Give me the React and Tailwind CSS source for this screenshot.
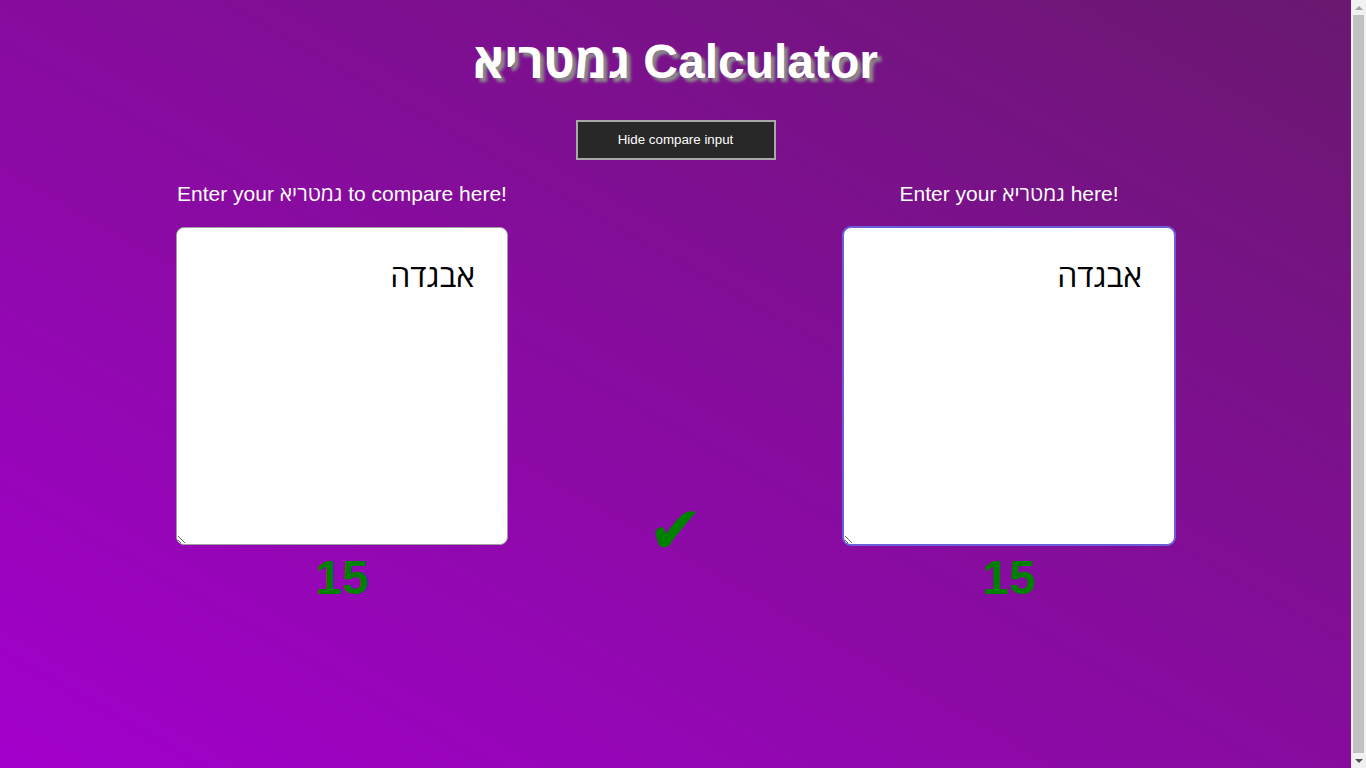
import { useState, useEffect, useRef } from "react";

// letter values
const VALUES = {
  "א": 1, "ב": 2, "ג": 3, "ד": 4, "ה": 5, "ו": 6, "ז": 7, "ח": 8, "ט": 9,
  "י": 10, "כ": 20, "ך": 20, "ל": 30, "מ": 40, "ם": 40, "נ": 50, "ן": 50,
  "ס": 60, "ע": 70, "פ": 80, "ף": 80, "צ": 90, "ץ": 90, "ק": 100, "ר": 200,
  "ש": 300, "ת": 400
};

const calc = (text) => [...text].reduce((sum, ch) => sum + (VALUES[ch] || 0), 0);

function Heb({ children }) {
  return <span className="font-['Open_Sans',sans-serif]">{children}</span>;
}

export default function App() {
  const [compareText, setCompareText] = useState("אבגדה");
  const [mainText, setMainText] = useState("אבגדה");
  const [showCompare, setShowCompare] = useState(true);
  const mainRef = useRef(null);

  useEffect(() => {
    const el = mainRef.current;
    if (el) {
      el.focus();
      el.setSelectionRange(el.value.length, el.value.length);
    }
  }, []);

  const compareSum = calc(compareText);
  const mainSum = calc(mainText);

  return (
    <div className="h-screen overflow-hidden flex font-['Liberation_Sans',Arial,sans-serif]">

      <div className="flex-1 bg-[linear-gradient(to_top_right,#a300cc,#6a1870)] text-white">

        {/* TITLE */}
        <h1 className="pt-8 text-center text-[48px] font-bold leading-[55px] [text-shadow:4px_4px_3px_#8a8a8a]">
          <Heb>גמטריא</Heb> Calculator
        </h1>

        {/* TOGGLE */}
        <div className="mt-[31px] flex justify-center">
          <button
            onClick={() => setShowCompare(!showCompare)}
            className="w-[200px] h-[40px] bg-[#282828] border-2 border-[#a9a9a9] text-[13.33px] text-white"
          >
            {showCompare ? "Hide compare input" : "Show compare input"}
          </button>
        </div>

        {/* INPUTS */}
        <div className="mt-[21px] flex justify-center">

          <div className="w-[332px] flex flex-col items-center">
            {showCompare && (
              <>
                <div className="h-[24px] text-[21px] leading-[24px] whitespace-nowrap">
                  Enter your <Heb>גמטריא</Heb> to compare here!
                </div>
                <textarea
                  dir="rtl"
                  value={compareText}
                  onChange={(e) => setCompareText(e.target.value)}
                  className="mt-[22px] w-[332px] h-[318px] bg-white text-black border border-[#a0a0a0] rounded-lg pt-[23px] px-8 text-[32px] font-['Open_Sans',sans-serif]"
                />
                <div className="mt-[5px] text-[48px] font-bold leading-[55px] text-[#008000]">{compareSum}</div>
              </>
            )}
          </div>

          {/* MATCH */}
          <div className="w-[335px] flex justify-center pt-[317px]">
            {showCompare && compareSum === mainSum && (
              <span className="text-[66px] leading-[66px] text-[#008000] font-['DejaVu_Sans',sans-serif]">✔</span>
            )}
          </div>

          <div className="w-[332px] flex flex-col items-center">
            <div className="h-[24px] text-[21px] leading-[24px] whitespace-nowrap">
              Enter your <Heb>גמטריא</Heb> here!
            </div>
            <textarea
              ref={mainRef}
              dir="rtl"
              value={mainText}
              onChange={(e) => setMainText(e.target.value)}
              className="mt-[22px] w-[332px] h-[318px] bg-white text-black border border-[#a0a0a0] rounded-lg pt-[23px] px-8 text-[32px] font-['Open_Sans',sans-serif] focus:outline-none focus:border-[#6a5fd8] focus:ring-1 focus:ring-[#6a5fd8]"
            />
            <div className="mt-[5px] text-[48px] font-bold leading-[55px] text-[#008000]">{mainSum}</div>
          </div>

        </div>
      </div>

      {/* SCROLLBAR */}
      <div className="w-[15px] bg-[#f1f1f1] flex flex-col items-center">
        <div className="h-[15px] flex items-center justify-center">
          <div className="w-0 h-0 border-x-[4px] border-x-transparent border-b-[4px] border-b-[#a3a3a3]" />
        </div>
        <div className="flex-1 w-[11px] bg-[#c1c1c1]" />
        <div className="h-[15px] flex items-center justify-center">
          <div className="w-0 h-0 border-x-[4px] border-x-transparent border-t-[4px] border-t-[#505050]" />
        </div>
      </div>
    </div>
  );
}
